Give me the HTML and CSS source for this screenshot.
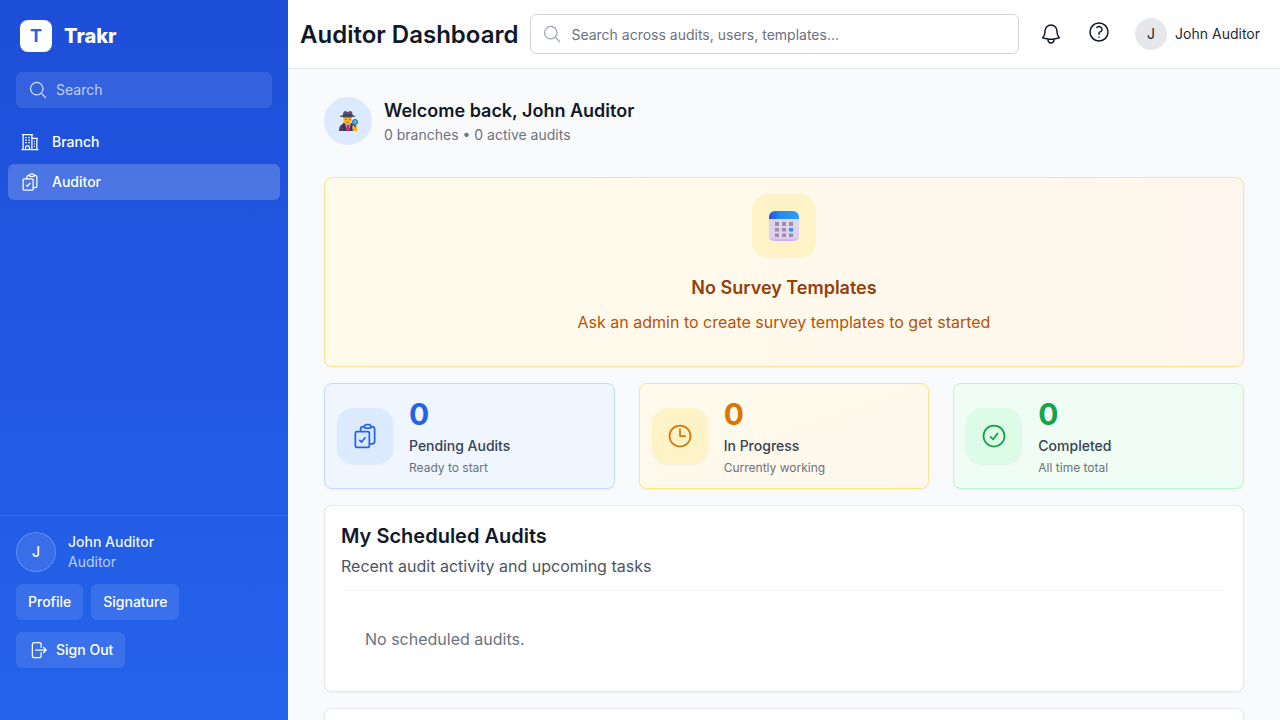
FILE: index.html
```html
<!DOCTYPE html>
<html lang="en">
<head>
<meta charset="utf-8">
<meta name="viewport" content="width=device-width, initial-scale=1">
<title>Auditor Dashboard</title>
<link rel="stylesheet" href="styles.css">
</head>
<body>
<svg class="sprite" aria-hidden="true">
  <symbol id="i-search" viewBox="0 0 24 24"><path d="m21 21-5.197-5.197m0 0A7.5 7.5 0 1 0 5.196 5.196a7.5 7.5 0 0 0 10.607 10.607Z"/></symbol>
  <symbol id="i-clipboard" viewBox="0 0 24 24"><path d="M11.35 3.836c-.065.21-.1.433-.1.664 0 .414.336.75.75.75h4.5a.75.75 0 0 0 .75-.75 2.25 2.25 0 0 0-.1-.664m-5.8 0A2.251 2.251 0 0 1 13.5 2.25H15c1.012 0 1.867.668 2.15 1.586m-5.8 0c-.376.023-.75.05-1.124.08C9.095 4.01 8.25 4.973 8.25 6.108V8.25m8.9-4.414c.376.023.75.05 1.124.08 1.131.094 1.976 1.057 1.976 2.192V16.5A2.25 2.25 0 0 1 18 18.75h-2.25m-7.5-10.5H4.875c-.621 0-1.125.504-1.125 1.125v11.25c0 .621.504 1.125 1.125 1.125h9.75c.621 0 1.125-.504 1.125-1.125V18.75m-7.5-10.5h6.375c.621 0 1.125.504 1.125 1.125v9.375m-8.25-3 1.5 1.5 3-3.75"/></symbol>
</svg>
<div class="app">
  <aside class="sidebar">
    <div class="brand"><span class="brand-mark">T</span><span class="brand-name">Trakr</span></div>
    <label class="side-search">
      <svg class="icon"><use href="#i-search"/></svg>
      <input type="search" placeholder="Search" aria-label="Search">
    </label>
    <nav class="nav">
      <a class="nav-link" href="#branch">
        <svg class="icon" viewBox="0 0 24 24"><path d="M2.25 21h19.5m-18-18v18m10.5-18v18m6-13.5V21M6.75 6.75h.75m-.75 3h.75m-.75 3h.75m3-6h.75m-.75 3h.75m-.75 3h.75M6.75 21v-3.375c0-.621.504-1.125 1.125-1.125h2.25c.621 0 1.125.504 1.125 1.125V21M3 3h12m-.75 4.5H21m-3.75 3.75h.008v.008h-.008v-.008Zm0 3h.008v.008h-.008v-.008Zm0 3h.008v.008h-.008v-.008Z"/></svg>
        Branch
      </a>
      <a class="nav-link nav-active" href="#auditor" aria-current="page">
        <svg class="icon"><use href="#i-clipboard"/></svg>
        Auditor
      </a>
    </nav>
    <div class="side-footer">
      <div class="side-user">
        <span class="side-avatar">J</span>
        <div>
          <div class="side-name">John Auditor</div>
          <div class="side-role">Auditor</div>
        </div>
      </div>
      <div class="side-actions">
        <button class="side-button" type="button">Profile</button>
        <button class="side-button" type="button">Signature</button>
      </div>
      <button class="side-button" type="button">
        <svg class="icon" viewBox="0 0 24 24"><path d="M15.75 9V5.25A2.25 2.25 0 0 0 13.5 3h-6a2.25 2.25 0 0 0-2.25 2.25v13.5A2.25 2.25 0 0 0 7.5 21h6a2.25 2.25 0 0 0 2.25-2.25V15m3 0 3-3m0 0-3-3m3 3H9"/></svg>
        Sign Out
      </button>
    </div>
  </aside>
  <div class="page">
    <header class="topbar">
      <h1 class="page-title">Auditor Dashboard</h1>
      <label class="top-search">
        <svg class="icon"><use href="#i-search"/></svg>
        <input type="search" placeholder="Search across audits, users, templates..." aria-label="Search across audits, users, templates">
      </label>
      <div class="top-actions">
        <button class="icon-button" type="button" aria-label="Notifications">
          <svg class="icon icon-md" viewBox="0 0 24 24"><path d="M14.857 17.082a23.848 23.848 0 0 0 5.454-1.31A8.967 8.967 0 0 1 18 9.75V9A6 6 0 0 0 6 9v.75a8.967 8.967 0 0 1-2.312 6.022c1.733.64 3.56 1.085 5.455 1.31m5.714 0a24.255 24.255 0 0 1-5.714 0m5.714 0a3 3 0 1 1-5.714 0"/></svg>
        </button>
        <button class="icon-button icon-button-raised" type="button" aria-label="Help">
          <svg class="icon icon-md" viewBox="0 0 24 24"><path d="M9.879 7.519c1.171-1.025 3.071-1.025 4.242 0 1.172 1.025 1.172 2.687 0 3.712-.203.179-.43.326-.67.442-.745.361-1.45.999-1.45 1.827v.75M21 12a9 9 0 1 1-18 0 9 9 0 0 1 18 0Zm-9 5.25h.008v.008H12v-.008Z"/></svg>
        </button>
      </div>
      <button class="account" type="button"><span class="account-avatar">J</span>John Auditor</button>
    </header>
    <main class="content">
      <section class="welcome">
        <span class="welcome-avatar">
          <svg class="detective" viewBox="0 0 20 20" aria-hidden="true">
            <path fill="#4b4264" d="M1 20c0-5 2-7 6-8l3 3 3-3c3 1 5 3 5 8z"/>
            <path fill="#3c3455" d="m6 11 3 9H6l-2-5zm7 1-2 8h2l3-6z"/>
            <path fill="#a99bc0" d="m7 12 3 2 3-2-2 8H9z"/>
            <path fill="#c92b5a" d="m9 14 1-1 1 1 .5 6h-3z"/>
            <path fill="#ffb51f" d="M5.5 6h8v3.500c0 2-1.500 4-4 4s-4-2-4-4z"/>
            <path fill="#5d3d32" d="M5 5h9v1.500H5z"/>
            <path fill="#8b6a39" d="M7 8h1.500v1H7zm4 0h1.500v1H11z"/>
            <path fill="#d1642e" d="M8 11q1.500-1 3 0v.8H8z"/>
            <path fill="#5a4f72" d="M5 4c0-3 1-4 2.500-4L10 1l2-1c2 0 2.500 2 2.500 4l2.500 1v1H2V5z"/>
            <path fill="#3d344e" d="M5 3.500h9.500V5H5z"/>
            <path fill="#f9ab1c" d="M15 14h3l1 2v4h-4l-1-4z"/>
            <path stroke="#4b4264" stroke-width="1.500" d="M17 13v3"/>
            <circle cx="17" cy="11" r="2.500" fill="#46bdf5" stroke="#1767a6"/>
          </svg>
        </span>
        <div>
          <h2 class="welcome-title">Welcome back, John Auditor</h2>
          <p class="welcome-meta">0 branches • 0 active audits</p>
        </div>
      </section>

      <section class="notice">
        <span class="notice-icon">
          <svg class="calendar" viewBox="0 0 30 30" aria-hidden="true">
            <defs>
              <linearGradient id="cal-top"><stop offset="0" stop-color="#284fd2"/><stop offset=".35" stop-color="#238bf5"/><stop offset="1" stop-color="#2c9ffb"/></linearGradient>
              <linearGradient id="cal-body" x2="0" y2="1"><stop offset="0" stop-color="#dfd4ec"/><stop offset=".85" stop-color="#dfd1f0"/><stop offset="1" stop-color="#cda7ef"/></linearGradient>
            </defs>
            <path fill="url(#cal-body)" d="M0 7h30v18a5 5 0 0 1-5 5H5a5 5 0 0 1-5-5z"/>
            <path fill="url(#cal-top)" d="M0 8V6a6 6 0 0 1 6-6h18a6 6 0 0 1 6 6v2z"/>
            <path fill="#9b8fa8" d="M6 11h4v4H6zm7 0h4v4h-4zm7 0h4v4h-4zM6 17h4v3.500H6zm7 0h4v3.500h-4zM6 22.500h4V26H6zm7 0h4V26h-4zm7 0h4V26h-4z"/>
            <path fill="#2294f5" d="M20 17h4v3.500h-4z"/>
          </svg>
        </span>
        <h2 class="notice-title">No Survey Templates</h2>
        <p class="notice-text">Ask an admin to create survey templates to get started</p>
      </section>

      <section class="stats" aria-label="Audit counts">
        <article class="stat stat-blue">
          <span class="stat-icon"><svg class="icon icon-lg"><use href="#i-clipboard"/></svg></span>
          <div><p class="stat-value">0</p><p class="stat-label">Pending Audits</p><p class="stat-note">Ready to start</p></div>
        </article>
        <article class="stat stat-amber">
          <span class="stat-icon"><svg class="icon icon-lg" viewBox="0 0 24 24"><path d="M12 6v6h4.500m4.500 0a9 9 0 1 1-18 0 9 9 0 0 1 18 0Z"/></svg></span>
          <div><p class="stat-value">0</p><p class="stat-label">In Progress</p><p class="stat-note">Currently working</p></div>
        </article>
        <article class="stat stat-green">
          <span class="stat-icon"><svg class="icon icon-lg" viewBox="0 0 24 24"><path d="M9 12.750 11.250 15 15 9.750M21 12a9 9 0 1 1-18 0 9 9 0 0 1 18 0Z"/></svg></span>
          <div><p class="stat-value">0</p><p class="stat-label">Completed</p><p class="stat-note">All time total</p></div>
        </article>
      </section>

      <section class="card">
        <div class="card-head">
          <h2 class="card-title">My Scheduled Audits</h2>
          <p class="card-text">Recent audit activity and upcoming tasks</p>
        </div>
        <p class="card-empty">No scheduled audits.</p>
      </section>
      <section class="card card-blank"></section>
    </main>
  </div>
</div>
</body>
</html>
```

FILE: styles.css
```css
* { box-sizing: border-box; }

body {
  margin: 0;
  font-family: Inter, "Liberation Sans", sans-serif;
  font-size: 14px;
  line-height: 20px;
  color: #111827;
}

h1, h2, p { margin: 0; }

button, input { font: inherit; color: inherit; }

button {
  border: 0;
  padding: 0;
  background: none;
  cursor: pointer;
}

input {
  flex: 1;
  min-width: 0;
  padding: 0;
  border: 0;
  outline: 0;
  background: none;
  appearance: none;
}

.sprite { display: none; }

.icon {
  flex: none;
  width: 20px;
  height: 20px;
  fill: none;
  stroke: currentColor;
  stroke-width: 1.5;
  stroke-linecap: round;
  stroke-linejoin: round;
}

.icon-md { width: 24px; height: 24px; }
.icon-lg { width: 28px; height: 28px; }

.app { display: flex; height: 100vh; }

/* Sidebar */
.sidebar {
  flex: none;
  display: flex;
  flex-direction: column;
  width: 288px;
  background: linear-gradient(#1d4ed8, #2563eb);
  color: #fff;
}

.brand {
  display: flex;
  align-items: center;
  gap: 12px;
  padding: 20px;
}

.brand-mark {
  display: grid;
  place-items: center;
  width: 32px;
  height: 32px;
  border-radius: 8px;
  background: #fff;
  color: #2563eb;
  font-size: 18px;
  font-weight: 700;
}

.brand-name { font-size: 20px; line-height: 28px; font-weight: 800; }

.side-search {
  display: flex;
  align-items: center;
  gap: 8px;
  height: 36px;
  margin: 0 16px;
  padding: 0 12px;
  border-radius: 6px;
  background: rgba(255, 255, 255, 0.1);
  color: rgba(255, 255, 255, 0.8);
}

.side-search input::placeholder { color: rgba(255, 255, 255, 0.7); }

.nav {
  flex: 1;
  display: flex;
  flex-direction: column;
  gap: 4px;
  padding: 16px 8px;
}

.nav-link {
  display: flex;
  align-items: center;
  gap: 12px;
  padding: 8px 12px;
  border-radius: 6px;
  color: #fff;
  font-weight: 500;
  text-decoration: none;
}

.nav-active { background: rgba(255, 255, 255, 0.2); }

.side-footer {
  display: flex;
  flex-direction: column;
  align-items: flex-start;
  gap: 12px;
  padding: 16px 16px 52px;
  border-top: 1px solid rgba(255, 255, 255, 0.1);
}

.side-user { display: flex; align-items: center; gap: 12px; }

.side-avatar {
  display: grid;
  place-items: center;
  width: 40px;
  height: 40px;
  border: 1px solid rgba(255, 255, 255, 0.2);
  border-radius: 50%;
  background: rgba(255, 255, 255, 0.1);
  font-weight: 500;
}

.side-name { font-weight: 500; color: rgba(255, 255, 255, 0.95); }
.side-role { color: rgba(255, 255, 255, 0.7); }
.side-actions { display: flex; gap: 8px; }

.side-button {
  display: flex;
  align-items: center;
  gap: 8px;
  padding: 8px 12px;
  border-radius: 6px;
  background: rgba(255, 255, 255, 0.1);
  font-weight: 500;
}

/* Top bar */
.page {
  flex: 1;
  display: flex;
  flex-direction: column;
  min-width: 0;
  background: #f9fafb;
}

.topbar {
  display: flex;
  align-items: center;
  gap: 12px;
  padding: 14px 20px 14px 12px;
  border-bottom: 1px solid #e5e7eb;
  background: #fff;
}

.page-title {
  padding-top: 2px;
  font-size: 24px;
  line-height: 32px;
  font-weight: 600;
  white-space: nowrap;
}

.top-search {
  flex: 1;
  display: flex;
  align-items: center;
  gap: 9px;
  height: 40px;
  padding: 0 11px;
  border: 1px solid #d1d5db;
  border-radius: 6px;
  color: #9ca3af;
}

.top-search input { padding-top: 2px; color: #111827; }
.top-search input::placeholder { color: #6b7280; }

.top-actions { display: flex; gap: 8px; }

.icon-button {
  display: grid;
  place-items: center;
  width: 40px;
  height: 40px;
}

.icon-button-raised { padding-bottom: 4px; }

.account {
  display: flex;
  align-items: center;
  gap: 8px;
  margin-left: 4px;
  color: #1f2937;
  white-space: nowrap;
}

.account-avatar {
  display: grid;
  place-items: center;
  width: 32px;
  height: 32px;
  border-radius: 50%;
  background: #e5e7eb;
}

/* Content */
.content {
  flex: 1;
  display: flex;
  flex-direction: column;
  gap: 16px;
  min-height: 0;
  padding: 28px 36px;
  overflow-y: auto;
  scrollbar-width: none;
}

.content > * { flex: none; }

.welcome {
  display: flex;
  align-items: center;
  gap: 12px;
  margin-bottom: 16px;
}

.welcome-avatar {
  display: grid;
  place-items: center;
  width: 48px;
  height: 48px;
  border-radius: 50%;
  background: #dbeafe;
}

.detective { width: 20px; height: 20px; }
.calendar { width: 30px; height: 30px; }

.welcome-title { font-size: 18px; line-height: 28px; font-weight: 600; }
.welcome-meta { color: #6b7280; }

.notice {
  display: flex;
  flex-direction: column;
  align-items: center;
  padding: 16px 16px 32px;
  border: 1px solid #fde68a;
  border-radius: 8px;
  background: linear-gradient(to right, #fffbeb, #fff7ed);
  box-shadow: 0 1px 2px rgba(0, 0, 0, 0.05);
  text-align: center;
}

.notice-icon {
  display: grid;
  place-items: center;
  width: 64px;
  height: 64px;
  border-radius: 16px;
  background: #fef3c7;
}

.notice-title {
  margin: 16px 0 8px;
  color: #92400e;
  font-size: 18px;
  line-height: 28px;
  font-weight: 600;
}

.notice-text { color: #b45309; font-size: 16px; line-height: 24px; }

.stats {
  display: grid;
  grid-template-columns: repeat(3, 1fr);
  gap: 24px;
}

.stat {
  display: flex;
  align-items: center;
  gap: 16px;
  padding: 12px;
  border: 1px solid;
  border-radius: 8px;
  box-shadow: 0 1px 2px rgba(0, 0, 0, 0.05);
}

.stat-icon {
  display: grid;
  place-items: center;
  width: 56px;
  height: 56px;
  border-radius: 16px;
  box-shadow: 0 1px 2px rgba(0, 0, 0, 0.05);
}

.stat-value { font-size: 30px; line-height: 36px; font-weight: 700; }
.stat-label { margin: 4px 0; color: #374151; font-weight: 500; }
.stat-note { color: #6b7280; font-size: 12px; line-height: 16px; }

.stat-blue { border-color: #bfdbfe; background: #eff6ff; }
.stat-blue .stat-icon { background: #dbeafe; color: #2563eb; }
.stat-blue .stat-value { color: #2563eb; }

.stat-amber { border-color: #fde68a; background: linear-gradient(to bottom right, #fffbeb, #fff7ed); }
.stat-amber .stat-icon { background: #fef3c7; color: #d97706; }
.stat-amber .stat-value { color: #d97706; }

.stat-green { border-color: #bbf7d0; background: #f0fdf4; }
.stat-green .stat-icon { background: #dcfce7; color: #16a34a; }
.stat-green .stat-value { color: #16a34a; }

.card {
  padding: 16px;
  border: 1px solid #e5e7eb;
  border-radius: 8px;
  background: #fff;
  box-shadow: 0 1px 2px rgba(0, 0, 0, 0.05);
  font-size: 16px;
  line-height: 24px;
}

.card-head { padding-bottom: 12px; border-bottom: 1px solid #f3f4f6; }
.card-title { margin-bottom: 4px; font-size: 20px; line-height: 28px; font-weight: 600; }
.card-text { color: #4b5563; }
.card-empty { margin-top: 12px; padding: 24px; color: #6b7280; }
.card-blank { min-height: 120px; }
```
